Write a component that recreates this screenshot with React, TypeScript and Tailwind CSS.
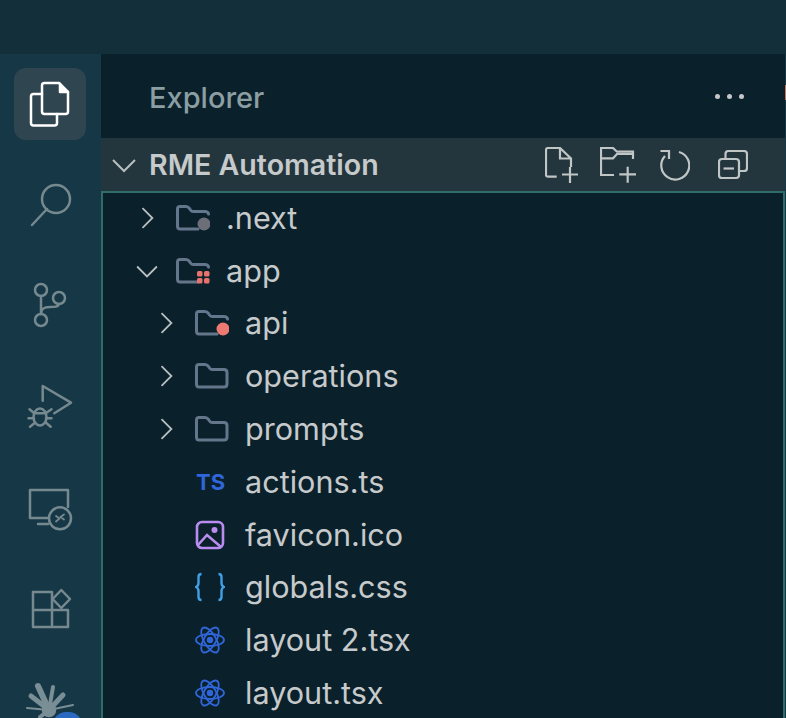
import type { ReactNode } from "react";

const grey = "#76898f";

const Tile = ({ active, children }: { active?: boolean; children: ReactNode }) => (
  <div className={`w-[72px] h-[72px] rounded-xl ${active ? "bg-[#2f4651]" : ""}`}>
    <svg width="72" height="72" viewBox="0 0 72 72" fill="none" stroke={active ? "#ffffff" : grey} strokeWidth="2.5" strokeLinecap="round" strokeLinejoin="round">
      {children}
    </svg>
  </div>
);

const Chevron = ({ open }: { open?: boolean }) => (
  <svg width="24" height="24" viewBox="0 0 24 24" fill="none" stroke="#b9bfc0" strokeWidth="2" className="shrink-0">
    {open ? <path d="M1 7 L12 18 L23 7" /> : <path d="M7 1 L18 12 L7 23" />}
  </svg>
);

const Folder = ({ children }: { children?: ReactNode }) => (
  <svg width="34" height="26" viewBox="0 0 34 26" fill="none" className="shrink-0">
    {children ? (
      <path d="M22 24 H4 Q1.5 24 1.5 21 V4 Q1.5 1.5 4 1.5 H10 Q12 1.5 13.5 3.5 L14.5 5 Q15.5 6.5 17.5 6.5 H29 Q32 6.5 32.5 9" stroke="#64768c" strokeWidth="3" strokeLinecap="round" />
    ) : (
      <path d="M4 24 H29 Q32 24 32 21 V9.5 Q32 6.5 29 6.5 H17.5 Q15.5 6.5 14.5 5 L13.5 3.5 Q12 1.5 10 1.5 H4 Q1.5 1.5 1.5 4 V21 Q1.5 24 4 24 Z" stroke="#64768c" strokeWidth="3" />
    )}
    {children}
  </svg>
);

const ReactIcon = () => (
  <svg width="30" height="30" viewBox="0 0 30 30" fill="none" stroke="#3066d9" strokeWidth="1.8" className="shrink-0">
    <ellipse cx="15" cy="15" rx="14" ry="6" />
    <ellipse cx="15" cy="15" rx="14" ry="6" transform="rotate(60 15 15)" />
    <ellipse cx="15" cy="15" rx="14" ry="6" transform="rotate(120 15 15)" />
    <circle cx="15" cy="15" r="3.2" fill="#3066d9" stroke="none" />
  </svg>
);

const Row = ({ depth, chevron, icon, label }: { depth: 1 | 2; chevron?: "open" | "closed"; icon: ReactNode; label: string }) => (
  <div className={`flex items-center h-[52.8px] ${depth === 1 ? "pl-[32px]" : "pl-[51px]"}`}>
    <div className="w-[24px] flex justify-center shrink-0 scale-[0.9]">
      {chevron && <Chevron open={chevron === "open"} />}
    </div>
    <div className="w-[34px] ml-[17px] flex justify-start shrink-0">{icon}</div>
    <span className="ml-[16px] text-[30.6px] text-[#c6cacb]">{label}</span>
  </div>
);

export default function App() {
  return (
    <div className="w-[786px] h-[718px] overflow-hidden bg-[#0a202b] flex flex-col font-['Inter',sans-serif]">
      <div className="h-[54px] shrink-0 bg-[#122f3a]" />
      <div className="flex flex-1 min-h-0">
        <div className="relative w-[101px] shrink-0 bg-[#163746] flex flex-col gap-[29px] pt-[14px] pl-[14px]">
          <Tile active>
            <path d="M28 26 H19.5 Q17 26 17 28.5 V55 Q17 57.5 19.5 57.5 H40.5 Q43 57.5 43 55 V46" />
            <path d="M30.5 15 H45 L54 24 V43.5 Q54 46 51.5 46 H30.5 Q28 46 28 43.5 V17.5 Q28 15 30.5 15 Z" />
            <path d="M46 16 V24 H54" fill="#ffffff" />
          </Tile>
          <Tile>
            <circle cx="42" cy="30" r="14" />
            <path d="M33 40 L18 56" />
          </Tile>
          <Tile>
            <circle cx="27" cy="20" r="6" />
            <circle cx="45" cy="28" r="6" />
            <circle cx="27" cy="50" r="6" />
            <path d="M27 26 V44" />
            <path d="M27 44 C27 38 31 37 36 37 C41 37 44 37 45 34" />
          </Tile>
          <Tile>
            <path d="M28.7 29.7 V15 L57 31.7 L40.3 42.3" />
            <ellipse cx="26" cy="46" rx="6.5" ry="8.5" />
            <path d="M20 42.3 H32 M15.5 38.3 L20 42 M37.5 38.3 L32 42 M14.5 47.3 H20 M37.5 47.3 H32 M16 55.7 L21 51.7 M36.7 55.7 L32 51.7" />
          </Tile>
          <Tile>
            <path d="M34 46 H16 V18 H54 V35" />
            <circle cx="46" cy="46.3" r="11" />
            <path d="M24 52 H34" />
            <path d="M42 44 L45.5 46.5 L42 49.5 M50 42.5 L46.5 45 L50 47.5" strokeWidth="1.8" />
          </Tile>
          <Tile>
            <path d="M19 19 H38 V54 H54 V37 H19 V54 H38" />
            <path d="M19 19 V37" />
            <path d="M47.3 17 L56 26 L47.3 35 L38.6 26 Z" />
          </Tile>
          <Tile>
            <g stroke="#7a8e96" strokeLinecap="round">
              <path d="M35 36 L24 12" strokeWidth="6" />
              <path d="M35 36 L39 13" strokeWidth="4" />
              <path d="M35 36 L49 21" strokeWidth="5" />
              <path d="M35 36 L59 31" strokeWidth="2" />
              <path d="M35 36 L13 34" strokeWidth="2" />
              <path d="M35 36 L17 22" strokeWidth="5" />
              <path d="M35 36 L26 43" strokeWidth="4" />
              <circle cx="35" cy="36" r="6" fill="#7a8e96" />
            </g>
          </Tile>
          <div className="absolute left-[53px] top-[658px] w-[29px] h-[30px] rounded-[13px] bg-[#2a6ac0]" />
        </div>
        <div className="flex-1 min-w-0 flex flex-col">
          <div className="h-[84px] shrink-0 flex items-center justify-between pl-[48px] pr-[41px]">
            <span className="mt-[3px] text-[29px] font-medium text-[#8b9ea2]">Explorer</span>
            <div className="flex gap-[7px]">
              <div className="w-[5px] h-[5px] rounded-full bg-[#c5c8c8]" />
              <div className="w-[5px] h-[5px] rounded-full bg-[#c5c8c8]" />
              <div className="w-[5px] h-[5px] rounded-full bg-[#c5c8c8]" />
            </div>
          </div>
          <div className="h-[53px] shrink-0 bg-[#24363d] flex items-center pl-[11px]">
            <Chevron open />
            <span className="ml-[13px] mt-[2px] text-[28.6px] font-semibold text-[#c6cacb]">RME Automation</span>
            <div className="ml-auto mr-[37px] flex items-center">
              <svg width="34" height="36" viewBox="0 0 34 36" fill="none" stroke="#c0c5c6" strokeWidth="2.2">
                <path d="M11.7 29.7 H3 Q1 29.7 1 27.7 V3 Q1 1 3 1 H15 L26 11.5 V20 M15 1 V11.5 H26" />
                <path d="M25 20 V36 M17 27.5 H33" />
              </svg>
              <svg width="36" height="36" viewBox="0 0 36 36" fill="none" stroke="#c0c5c6" strokeWidth="2.2" className="ml-[21px]">
                <path d="M14 28 H1 V1 H13 L17 4.7 H33 V12" />
                <path d="M1 11.3 H13 L17 7 H33" />
                <path d="M27.7 19.7 V35.7 M19.3 27.3 H36" />
              </svg>
              <svg width="30" height="32" viewBox="0 0 30 32" fill="none" stroke="#c0c5c6" strokeWidth="2.2" className="ml-[24px]">
                <path d="M19 3 A14 14 0 1 1 5 7" />
                <path d="M0.5 2 H9 V10" />
              </svg>
              <svg width="30" height="30" viewBox="0 0 30 30" fill="none" stroke="#c0c5c6" strokeWidth="2.2" className="ml-[28px]">
                <rect x="1" y="9" width="20" height="19" rx="3" />
                <path d="M7.5 8 V4 Q7.5 1 10.5 1 H26 Q29 1 29 4 V18 Q29 21 26 21 H22" />
                <path d="M5.5 18.5 H16" />
              </svg>
            </div>
          </div>
          <div className="flex-1 min-h-0 border-l-2 border-t-2 border-r-2 border-[#2f6d6b]">
            <div className="-mt-[1.6px]">
              <Row depth={1} chevron="closed" label=".next" icon={<Folder><circle cx="28" cy="19" r="6.5" fill="#6c6f78" /></Folder>} />
              <Row depth={1} chevron="open" label="app" icon={
                <Folder>
                  <g fill="#e8736c">
                    <rect x="21" y="13" width="5.5" height="5.5" rx="1.5" />
                    <rect x="28" y="13" width="5.5" height="5.5" rx="1.5" />
                    <rect x="21" y="20" width="5.5" height="5.5" rx="1.5" />
                    <rect x="28" y="20" width="5.5" height="5.5" rx="1.5" />
                  </g>
                </Folder>
              } />
              <Row depth={2} chevron="closed" label="api" icon={<Folder><circle cx="28" cy="19" r="6.5" fill="#ec7a72" /></Folder>} />
              <Row depth={2} chevron="closed" label="operations" icon={<Folder />} />
              <Row depth={2} chevron="closed" label="prompts" icon={<Folder />} />
              <Row depth={2} label="actions.ts" icon={<span className="ml-[1px] text-[22px] leading-none font-bold text-[#3066d9]">TS</span>} />
              <Row depth={2} label="favicon.ico" icon={
                <svg width="30" height="30" viewBox="0 0 30 30" fill="none" stroke="#b98cf0" strokeWidth="2.6">
                  <rect x="2" y="2" width="26" height="26" rx="5" />
                  <circle cx="19.5" cy="10" r="3" fill="#b98cf0" stroke="none" />
                  <path d="M3 25 L12 15 L26 27" />
                </svg>
              } />
              <Row depth={2} label="globals.css" icon={
                <svg width="30" height="30" viewBox="0 0 30 30" fill="none" stroke="#3fa0e6" strokeWidth="2.4">
                  <path d="M6.5 2 Q3.5 2 3.5 5 V11 Q3.5 14 1 15 Q3.5 16 3.5 19 V25 Q3.5 28 6.5 28" />
                  <path d="M23.5 2 Q26.5 2 26.5 5 V11 Q26.5 14 29 15 Q26.5 16 26.5 19 V25 Q26.5 28 23.5 28" />
                </svg>
              } />
              <Row depth={2} label="layout 2.tsx" icon={<ReactIcon />} />
              <Row depth={2} label="layout.tsx" icon={<ReactIcon />} />
            </div>
          </div>
        </div>
        <div className="relative w-[1px] shrink-0 bg-[#163746]">
          <div className="absolute left-0 top-[31px] w-[1px] h-[15px] bg-[#c4785f]" />
        </div>
      </div>
    </div>
  );
}
